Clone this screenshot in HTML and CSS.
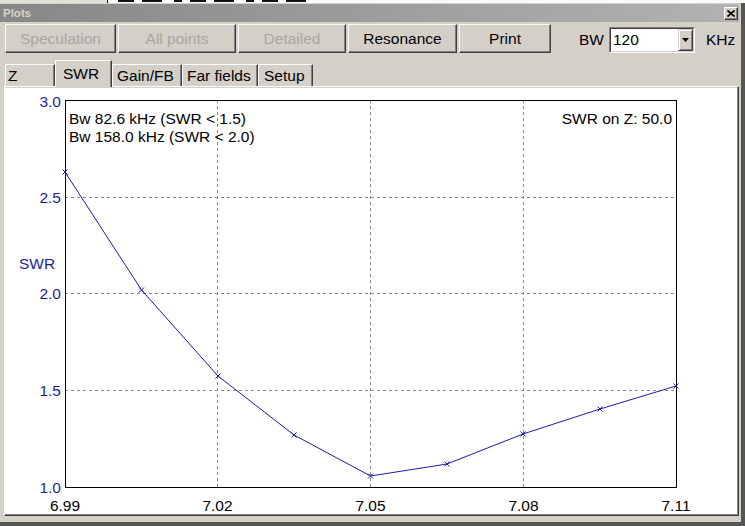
FILE: index.html
```html
<!DOCTYPE html>
<html>
<head>
<meta charset="utf-8">
<title>Plots</title>
<link rel="stylesheet" href="styles.css">
</head>
<body>
<div class="backdrop">
  <span class="bd-left"></span>
  <span class="bd-edge"></span>
  <span class="bd-text"></span>
</div>
<div class="window">
  <div class="titlebar">
    <span class="title">Plots</span>
    <span class="close"><svg width="8" height="7" viewBox="0 0 8 7"><path d="M0.5 0.5 L7.5 6.5 M7.5 0.5 L0.5 6.5" stroke="#000" stroke-width="1.7"/></svg></span>
  </div>
  <div class="toolbar">
    <button class="btn w-spec" disabled>Speculation</button>
    <button class="btn w-all" disabled>All points</button>
    <button class="btn w-det" disabled>Detailed</button>
    <button class="btn w-res">Resonance</button>
    <button class="btn w-print">Print</button>
    <span class="bw-label">BW</span>
    <div class="combo">
      <div class="combo-inner">
        <span class="combo-value">120</span>
        <span class="combo-btn"><svg width="7" height="4" viewBox="0 0 7 4"><polygon points="0,0 7,0 3.5,4" fill="#000"/></svg></span>
      </div>
    </div>
    <span class="unit">KHz</span>
  </div>
  <div class="tabs">
    <div class="tab tab-z">Z</div>
    <div class="tab tab-swr">SWR</div>
    <div class="tab tab-gain">Gain/FB</div>
    <div class="tab tab-far">Far fields</div>
    <div class="tab tab-setup">Setup</div>
  </div>
  <div class="panel">
    <svg class="chart" width="732" height="426" viewBox="5 88 732 426">
      <g class="grid">
        <line x1="217.5" y1="100" x2="217.5" y2="487"/>
        <line x1="370.5" y1="100" x2="370.5" y2="487"/>
        <line x1="523.5" y1="100" x2="523.5" y2="487"/>
        <line x1="65" y1="197.5" x2="676" y2="197.5"/>
        <line x1="65" y1="293.5" x2="676" y2="293.5"/>
        <line x1="65" y1="390.5" x2="676" y2="390.5"/>
      </g>
      <rect class="frame" x="65.5" y="100.5" width="611" height="387"/>
      <polyline class="curve" points="65,172 141.5,290 218,376 294,435 370.5,476 447,464 523,434 600,409 676,386"/>
      <path class="marks" d="M62.5 169.5 L67.5 174.5 M67.5 169.5 L62.5 174.5
        M139 287.5 L144 292.5 M144 287.5 L139 292.5
        M215.5 373.5 L220.5 378.5 M220.5 373.5 L215.5 378.5
        M291.5 432.5 L296.5 437.5 M296.5 432.5 L291.5 437.5
        M368 473.5 L373 478.5 M373 473.5 L368 478.5
        M444.5 461.5 L449.5 466.5 M449.5 461.5 L444.5 466.5
        M520.5 431.5 L525.5 436.5 M525.5 431.5 L520.5 436.5
        M597.5 406.5 L602.5 411.5 M602.5 406.5 L597.5 411.5
        M673.5 383.5 L678.5 388.5 M678.5 383.5 L673.5 388.5"/>
      <g class="ylabels">
        <text x="61" y="107">3.0</text>
        <text x="61" y="203">2.5</text>
        <text x="61" y="299">2.0</text>
        <text x="61" y="396">1.5</text>
        <text x="61" y="493">1.0</text>
      </g>
      <text class="ytitle" x="19" y="269">SWR</text>
      <g class="xlabels">
        <text x="65" y="511">6.99</text>
        <text x="217.5" y="511">7.02</text>
        <text x="370.5" y="511">7.05</text>
        <text x="523.5" y="511">7.08</text>
        <text x="676" y="511">7.11</text>
      </g>
      <text class="info" x="69" y="124">Bw 82.6 kHz (SWR &lt; 1.5)</text>
      <text class="info" x="69" y="142">Bw 158.0 kHz (SWR &lt; 2.0)</text>
      <text class="info info-right" x="672" y="124">SWR on Z: 50.0</text>
    </svg>
  </div>
</div>
</body>
</html>
```

FILE: styles.css
```css
* {
  box-sizing: border-box;
}

html,
body {
  margin: 0;
  padding: 0;
}

body {
  width: 745px;
  height: 526px;
  overflow: hidden;
  background: #d4d0c8;
  font-family: "Liberation Sans", Arial, sans-serif;
  font-size: 15.5px;
  color: #000;
}

/* strip of the window behind */
.backdrop {
  height: 3px;
  display: flex;
  background: #fafafa;
}

.bd-left {
  width: 107px;
  background: #e2e0da;
}

.bd-edge {
  width: 1px;
  background: #000;
}

.bd-text {
  width: 195px;
  height: 2px;
  margin-left: 10px;
  background: repeating-linear-gradient(90deg, #111 0 16px, transparent 16px 24px, #111 24px 44px, transparent 44px 56px, #111 56px 64px, transparent 64px 72px);
}

.window {
  height: 523px;
  display: flex;
  flex-direction: column;
  padding: 1px 2px 6px 0;
  border-right: 4px solid #565656;
  border-bottom: 4px solid #565656;
}

.titlebar {
  height: 18px;
  flex: none;
  display: flex;
  align-items: center;
  justify-content: space-between;
  padding: 0 1px 0 3px;
  background: linear-gradient(90deg, #878787, #b2b2b2);
}

.title {
  font-weight: bold;
  font-size: 11.5px;
  color: #d8d4cc;
}

.close {
  width: 14px;
  height: 13px;
  display: flex;
  align-items: center;
  justify-content: center;
  background: #d4d0c8;
  border: 1px solid;
  border-color: #fff #404040 #404040 #fff;
  box-shadow: inset -1px -1px #808080;
}

.close svg {
  display: block;
}

.toolbar {
  height: 29px;
  flex: none;
  margin-top: 2px;
  padding-left: 5px;
  display: flex;
  align-items: center;
  gap: 2px;
}

.btn {
  height: 29px;
  padding: 0;
  margin: 0;
  font-family: "Liberation Sans", Arial, sans-serif;
  font-size: 15.5px;
  color: #000;
  background: #d4d0c8;
  border: 1px solid;
  border-color: #fff #404040 #404040 #fff;
  box-shadow: inset -1px -1px #808080;
}

.btn:disabled {
  color: #a9a69f;
}

.w-spec { width: 111px; }
.w-all { width: 118px; }
.w-det { width: 108px; }
.w-res { width: 109px; }
.w-print { width: 92px; }

.bw-label {
  margin-left: 26px;
  margin-right: 3px;
  padding-top: 2px;
}

.combo {
  width: 86px;
  height: 26px;
  align-self: flex-end;
  border: 1px solid;
  border-color: #808080 #fff #fff #808080;
}

.combo-inner {
  height: 100%;
  display: flex;
  background: #fff;
  border: 1px solid;
  border-color: #404040 #d4d0c8 #d4d0c8 #404040;
}

.combo-value {
  flex: 1;
  padding-left: 2px;
  line-height: 22px;
}

.combo-btn {
  width: 15px;
  display: flex;
  align-items: center;
  justify-content: center;
  background: #d4d0c8;
  border: 1px solid;
  border-color: #d4d0c8 #404040 #404040 #d4d0c8;
  box-shadow: inset 1px 1px #fff, inset -1px -1px #808080;
}

.combo-btn svg {
  display: block;
}

.unit {
  margin-left: 9px;
  padding-top: 2px;
}

.tabs {
  height: 26px;
  flex: none;
  margin-top: 7px;
  padding-left: 5px;
  display: flex;
  align-items: flex-end;
}

.tab {
  height: 22px;
  padding: 1px 0 0 4px;
  line-height: 20px;
  background: #d4d0c8;
  border-top: 1px solid #fff;
  border-left: 1px solid #fff;
  border-right: 1px solid #404040;
  box-shadow: inset -1px 0 #808080;
  white-space: nowrap;
}

.tab-z {
  width: 50px;
  padding-left: 2px;
}

.tab-swr {
  width: 57px;
  height: 27px;
  margin-bottom: -1px;
  padding: 3px 0 0 7px;
  position: relative;
  z-index: 1;
}

.tab-gain { width: 70px; }
.tab-far { width: 76px; }

.tab-setup {
  width: 55px;
  padding-left: 5px;
}

.panel {
  width: 735px;
  height: 430px;
  flex: none;
  margin-left: 4px;
  padding: 1px 1px 1px 0;
  background: #d4d0c8;
  border: 1px solid;
  border-color: #fff #404040 #404040 #fff;
  box-shadow: inset -1px -1px #808080;
}

.chart {
  display: block;
  background: #fff;
}

.chart text {
  font-family: "Liberation Sans", Arial, sans-serif;
  font-size: 15.5px;
}

.grid line {
  stroke: #8a8a8a;
  stroke-width: 1;
  stroke-dasharray: 3 3;
}

.frame {
  fill: none;
  stroke: #000;
  stroke-width: 1;
}

.curve {
  fill: none;
  stroke: #1c1cae;
  stroke-width: 1;
}

.marks {
  fill: none;
  stroke: #1c1cae;
  stroke-width: 1;
}

.ylabels text {
  fill: #1e1ea2;
  text-anchor: end;
}

.ytitle {
  fill: #1e1ea2;
}

.xlabels text {
  fill: #000;
  text-anchor: middle;
}

.info {
  fill: #000;
}

.info-right {
  text-anchor: end;
}
```
